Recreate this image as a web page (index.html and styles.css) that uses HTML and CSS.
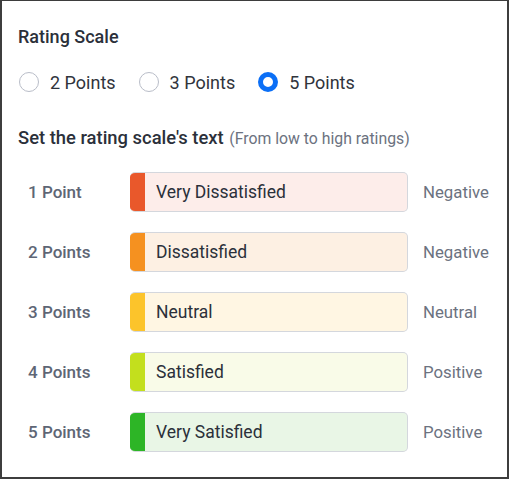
FILE: index.html
```html
<!DOCTYPE html>
<html lang="en">
<head>
    <meta charset="UTF-8">
    <meta name="viewport" content="width=device-width, initial-scale=1.0">
    <title>Rating Scale</title>
    <link rel="stylesheet" href="styles.css">
</head>
<body>
    <div class="panel">
        <h3 class="panel-title">Rating Scale</h3>

        <div class="radio-group">
            <label class="radio"><span class="radio-dot"></span>2 Points</label>
            <label class="radio"><span class="radio-dot"></span>3 Points</label>
            <label class="radio checked"><span class="radio-dot"></span>5 Points</label>
        </div>

        <h3 class="section-title">Set the rating scale's text <span class="hint">(From low to high ratings)</span></h3>

        <div class="scale-list">
            <div class="scale-row">
                <span class="scale-label">1 Point</span>
                <div class="scale-input level-1"><span class="bar"></span><span class="value">Very Dissatisfied</span></div>
                <span class="scale-kind">Negative</span>
            </div>
            <div class="scale-row">
                <span class="scale-label">2 Points</span>
                <div class="scale-input level-2"><span class="bar"></span><span class="value">Dissatisfied</span></div>
                <span class="scale-kind">Negative</span>
            </div>
            <div class="scale-row">
                <span class="scale-label">3 Points</span>
                <div class="scale-input level-3"><span class="bar"></span><span class="value">Neutral</span></div>
                <span class="scale-kind">Neutral</span>
            </div>
            <div class="scale-row">
                <span class="scale-label">4 Points</span>
                <div class="scale-input level-4"><span class="bar"></span><span class="value">Satisfied</span></div>
                <span class="scale-kind">Positive</span>
            </div>
            <div class="scale-row">
                <span class="scale-label">5 Points</span>
                <div class="scale-input level-5"><span class="bar"></span><span class="value">Very Satisfied</span></div>
                <span class="scale-kind">Positive</span>
            </div>
        </div>
    </div>
</body>
</html>
```

FILE: styles.css
```css
* {
    box-sizing: border-box;
}

body {
    margin: 0;
    background: #fff;
    font-family: Roboto, 'Liberation Sans', sans-serif;
    color: #2b303a;
}

.panel {
    width: 509px;
    height: 479px;
    border: 2px solid #3d3d3d;
    border-top-width: 1px;
    padding: 26px 0 0 16px;
}

.panel-title {
    margin: 0;
    font-size: 18px;
    font-weight: 500;
    line-height: 20px;
}

.radio-group {
    display: flex;
    margin-top: 25px;
    height: 20px;
}

.radio {
    display: flex;
    align-items: center;
    font-size: 18px;
    color: #30343c;
    margin-right: 22px;
}

.radio-dot {
    width: 20px;
    height: 20px;
    border: 1px solid #b9bdc8;
    border-radius: 50%;
    margin: 0 11px 0 1px;
}

.radio.checked .radio-dot {
    border: 5.5px solid #0b6ff6;
}

.section-title {
    margin: 36px 0 0;
    font-size: 18.4px;
    font-weight: 500;
    line-height: 20px;
}

.hint {
    font-size: 15.8px;
    font-weight: 400;
    color: #6c7280;
    margin-left: 1px;
}

.scale-list {
    margin-top: 23px;
    padding-left: 10px;
}

.scale-row {
    display: flex;
    align-items: center;
    height: 40px;
    margin-bottom: 20px;
}

.scale-label {
    width: 102px;
    font-size: 17px;
    font-weight: 500;
    color: #5e6675;
}

.scale-input {
    display: flex;
    width: 278px;
    height: 40px;
    border: 1px solid #d4d7dd;
    border-left: none;
    border-radius: 5px;
    overflow: hidden;
}

.bar {
    width: 15px;
}

.value {
    display: flex;
    align-items: center;
    padding-left: 11px;
    font-size: 17.5px;
    color: #2b303a;
}

.scale-kind {
    margin-left: 15px;
    font-size: 16.8px;
    color: #6c7280;
}

.level-1 { background: #fdedea; }
.level-1 .bar { background: #e9582b; }
.level-2 { background: #fdf0e3; }
.level-2 .bar { background: #f59120; }
.level-3 { background: #fff6e3; }
.level-3 .bar { background: #fcc42b; }
.level-4 { background: #f9fbe8; }
.level-4 .bar { background: #c3df1d; }
.level-5 { background: #e9f6e6; }
.level-5 .bar { background: #2db526; }
```
